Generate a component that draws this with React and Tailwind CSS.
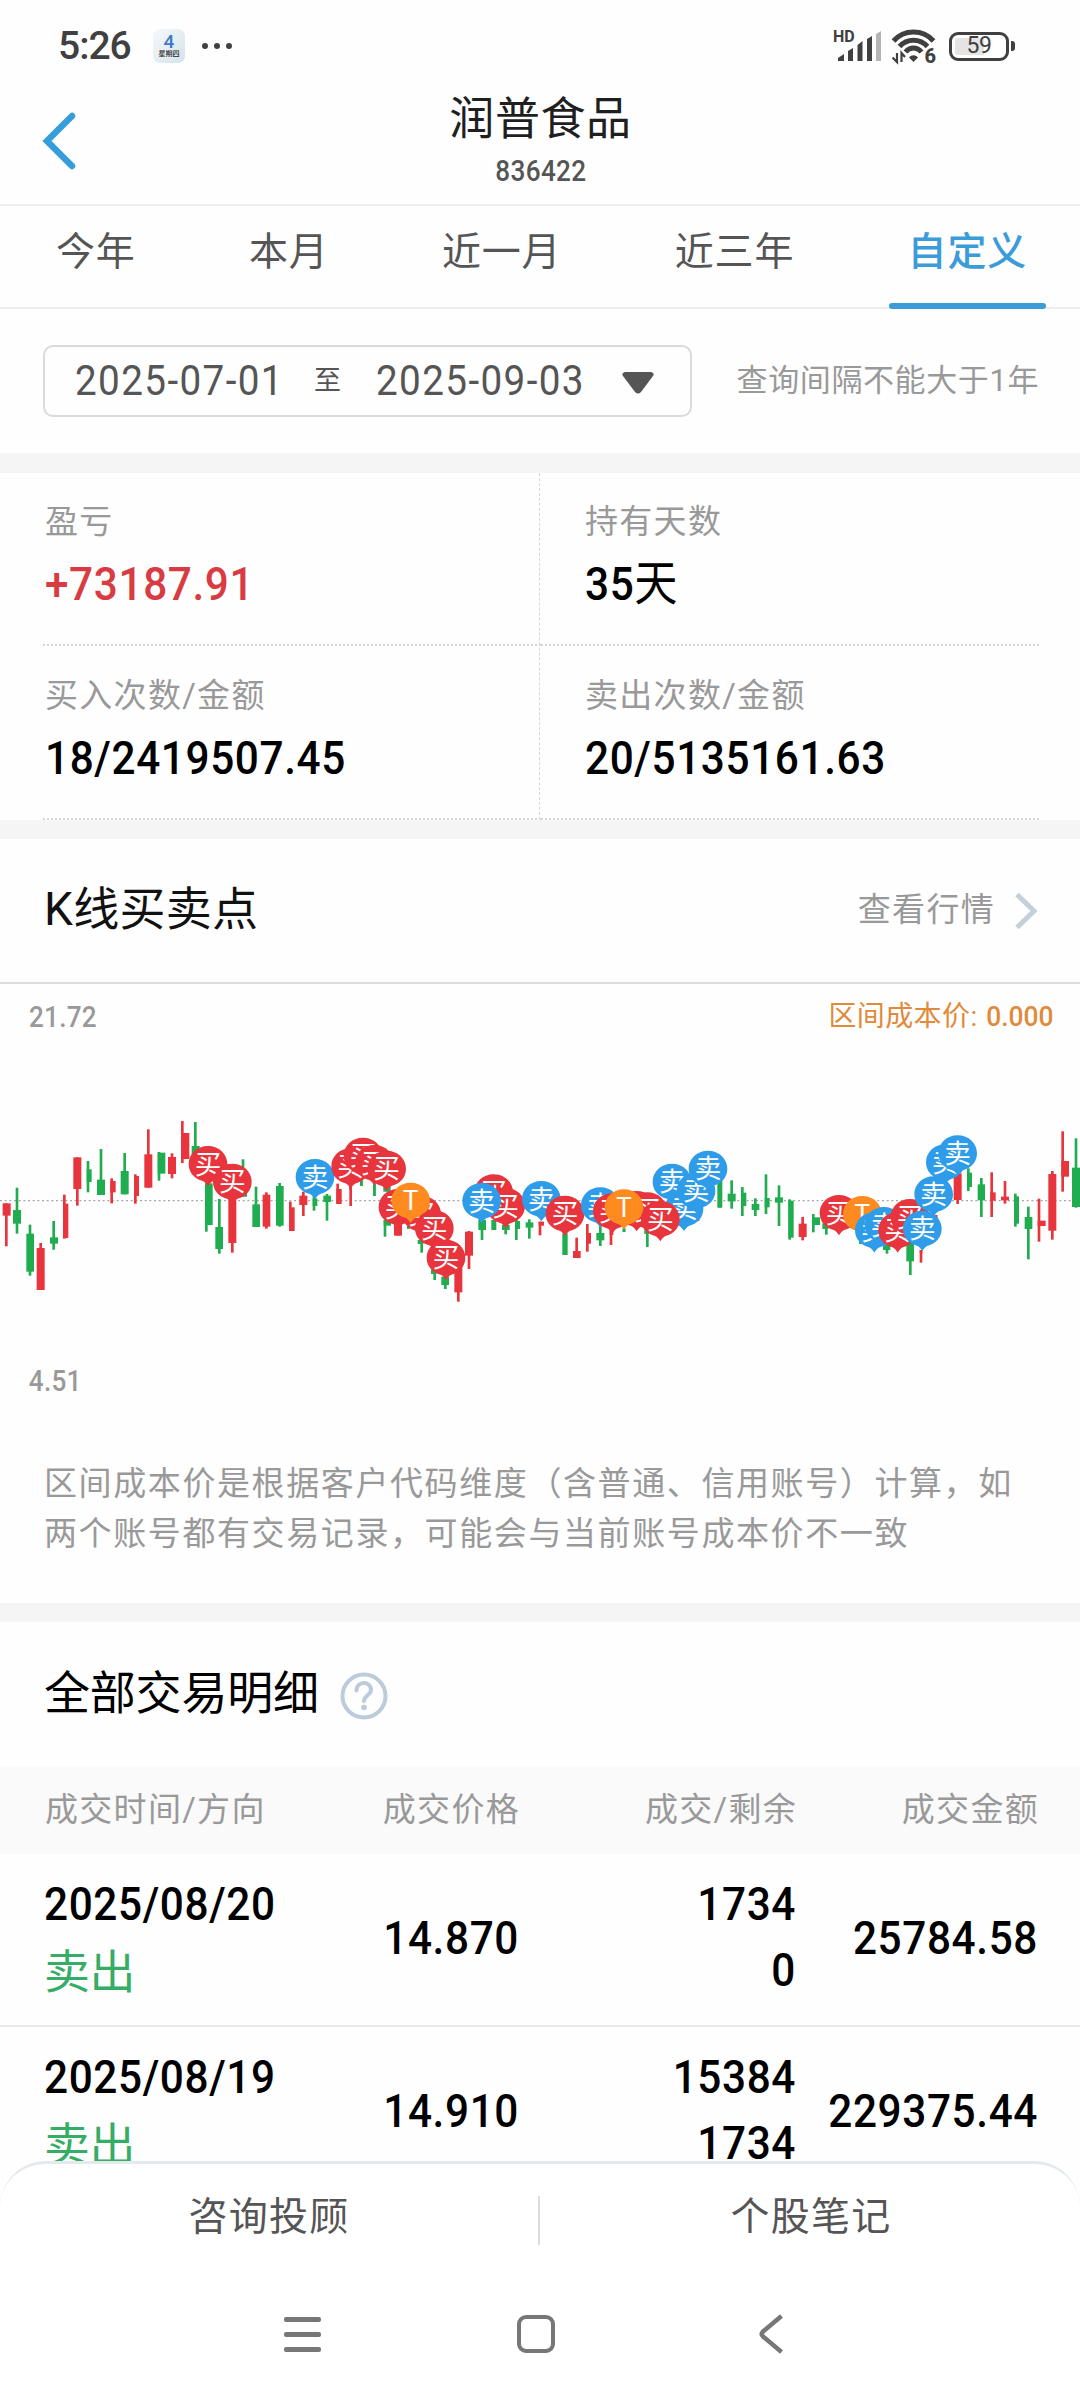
const RED = "#e8343c"
const GREEN = "#1fad50"
const BLUE = "#2f9ce9"
const ORANGE = "#ff8a1f"

const TABS = ["今年", "本月", "近一月", "近三年", "自定义"]

const STATS = [
  { label: "盈亏", value: "+73187.91", color: "text-[#d93b42]" },
  { label: "持有天数", value: "35", unit: "天", color: "text-black" },
  { label: "买入次数/金额", value: "18/2419507.45", color: "text-black" },
  { label: "卖出次数/金额", value: "20/5135161.63", color: "text-black" },
]

const TRADES = [
  { date: "2025/08/20", side: "卖出", price: "14.870", qty: "1734", left: "0", amount: "25784.58" },
  { date: "2025/08/19", side: "卖出", price: "14.910", qty: "15384", left: "1734", amount: "229375.44" },
]

// wick x, high, low, body left, body right, body top, body bottom
const UP = [
  [19, 340, 469, 8, 32, 340, 377],
  [122, 459, 600, 110, 134, 474, 600],
  [193, 314, 446, 189, 205, 341, 444],
  [232, 202, 347, 220, 244, 202, 297],
  [335, 265, 340, 331, 347, 273, 307],
  [406, 253, 341, 402, 417, 258, 318],
  [445, 118, 293, 433, 457, 193, 293],
  [516, 190, 265, 504, 528, 201, 252],
  [547, 93, 219, 543, 568, 129, 207],
  [697, 300, 488, 685, 709, 300, 459],
  [799, 307, 416, 788, 811, 314, 410],
  [871, 335, 423, 867, 884, 352, 423],
  [910, 305, 378, 898, 922, 317, 345],
  [1013, 281, 342, 1009, 1025, 297, 342],
  [1052, 280, 348, 1048, 1056, 280, 300],
  [1194, 372, 437, 1182, 1206, 372, 437],
  [1375, 530, 635, 1363, 1387, 530, 607],
  [1407, 423, 537, 1395, 1419, 425, 497],
  [1620, 395, 436, 1616, 1632, 395, 407],
  [1730, 443, 504, 1719, 1742, 483, 504],
  [1762, 402, 485, 1758, 1773, 429, 461],
  [1833, 420, 465, 1829, 1840, 420, 435],
  [2094, 385, 393, 2090, 2097, 385, 393],
  [2408, 381, 451, 2396, 2420, 401, 441],
  [2763, 480, 518, 2759, 2767, 480, 490],
  [2808, 375, 395, 2804, 2812, 375, 395],
  [2873, 250, 342, 2861, 2885, 250, 330],
  [2975, 247, 381, 2971, 2987, 307, 332],
  [3015, 273, 341, 3003, 3027, 320, 331],
  [3117, 326, 455, 3113, 3137, 392, 408],
  [3157, 243, 449, 3145, 3169, 252, 422],
  [3188, 124, 305, 3184, 3207, 213, 260],
]

const DOWN = [
  [51, 293, 431, 39, 63, 360, 401],
  [90, 404, 557, 79, 102, 431, 545],
  [161, 393, 479, 150, 174, 442, 461],
  [264, 213, 307, 260, 275, 238, 276],
  [303, 177, 315, 291, 315, 269, 315],
  [374, 189, 313, 362, 386, 243, 313],
  [477, 186, 272, 473, 496, 188, 251],
  [586, 96, 230, 575, 599, 168, 230],
  [619, 280, 425, 615, 638, 280, 405],
  [658, 327, 491, 646, 669, 411, 477],
  [729, 208, 320, 725, 741, 300, 320],
  [768, 290, 411, 757, 780, 343, 411],
  [839, 279, 410, 828, 851, 288, 407],
  [942, 310, 362, 938, 952, 325, 348],
  [981, 312, 392, 970, 993, 317, 336],
  [1084, 270, 288, 1080, 1088, 270, 288],
  [1123, 280, 318, 1119, 1127, 280, 318],
  [1161, 285, 305, 1150, 1172, 285, 305],
  [1155, 390, 440, 1151, 1173, 390, 407],
  [1225, 400, 416, 1221, 1229, 400, 416],
  [1265, 450, 488, 1253, 1270, 450, 462],
  [1304, 540, 570, 1293, 1310, 540, 552],
  [1336, 560, 597, 1324, 1347, 560, 585],
  [1446, 390, 450, 1435, 1458, 390, 420],
  [1481, 390, 420, 1474, 1489, 390, 420],
  [1517, 400, 433, 1506, 1529, 405, 420],
  [1549, 390, 450, 1545, 1560, 393, 417],
  [1588, 388, 446, 1577, 1600, 397, 413],
  [1695, 430, 495, 1687, 1703, 430, 495],
  [1801, 400, 468, 1789, 1813, 429, 451],
  [1872, 415, 426, 1868, 1876, 415, 426],
  [1942, 415, 471, 1933, 1946, 415, 432],
  [2160, 270, 353, 2152, 2167, 270, 353],
  [2195, 271, 356, 2183, 2207, 311, 334],
  [2227, 291, 378, 2223, 2239, 308, 348],
  [2266, 325, 378, 2255, 2278, 342, 360],
  [2298, 253, 372, 2294, 2309, 324, 352],
  [2337, 286, 408, 2325, 2349, 322, 338],
  [2369, 328, 449, 2365, 2381, 332, 443],
  [2440, 372, 427, 2436, 2460, 382, 405],
  [2479, 400, 434, 2467, 2485, 400, 417],
  [2582, 450, 462, 2578, 2586, 450, 462],
  [2661, 465, 491, 2649, 2671, 465, 480],
  [2731, 455, 555, 2719, 2742, 455, 514],
  [2905, 235, 303, 2901, 2916, 248, 291],
  [2944, 264, 381, 2933, 2955, 283, 331],
  [3046, 311, 410, 3042, 3057, 319, 401],
  [3085, 350, 508, 3074, 3097, 381, 417],
  [3228, 145, 353, 3216, 3240, 233, 351],
]

// label, x, top
const MARKERS = [
  ["买", 624, 168],
  ["买", 697, 221],
  ["卖", 945, 207],
  ["买", 1052, 175],
  ["买", 1089, 143],
  ["买", 1123, 165],
  ["买", 1160, 182],
  ["买", 1194, 297],
  ["买", 1265, 318],
  ["T", 1232, 278],
  ["买", 1303, 361],
  ["买", 1338, 449],
  ["买", 1481, 253],
  ["买", 1517, 294],
  ["卖", 1445, 279],
  ["卖", 1624, 273],
  ["买", 1695, 317],
  ["卖", 1801, 292],
  ["买", 1837, 310],
  ["买", 1910, 303],
  ["买", 1942, 307],
  ["T", 1872, 298],
  ["卖", 2016, 221],
  ["卖", 2052, 302],
  ["卖", 2088, 248],
  ["卖", 2124, 182],
  ["买", 1981, 333],
  ["买", 2517, 315],
  ["T", 2587, 318],
  ["卖", 2623, 367],
  ["卖", 2652, 351],
  ["买", 2693, 367],
  ["买", 2730, 327],
  ["卖", 2767, 362],
  ["卖", 2836, 163],
  ["卖", 2873, 136],
  ["卖", 2801, 259],
]

const markerColor = (label) => (label === "买" ? RED : label === "卖" ? BLUE : ORANGE)

function Candles({ data, color }) {
  return (
    <g fill={color}>
      {data.map(([x, high, low, left, right, top, bottom], i) => (
        <g key={i}>
          <rect x={x - 4} y={high} width={8} height={low - high} />
          <rect x={left} y={top} width={right - left} height={bottom - top} />
        </g>
      ))}
    </g>
  )
}

function KLineChart() {
  return (
    <svg viewBox="0 0 3240 720" className="block h-[240px] w-[1080px]">
      <line x1="0" x2="3240" y1="332" y2="332" stroke="#a8a8a8" strokeWidth="4" strokeDasharray="6 8" />
      <Candles data={UP} color={RED} />
      <Candles data={DOWN} color={GREEN} />
      {MARKERS.map(([label, x, top], i) => (
        <g key={i} transform={`translate(${x} ${top})`}>
          <path
            d="M0 0C33 0 58 24 58 54C58 80 40 99 16 105C10 107 5 113 0 121C-5 113 -10 107 -16 105C-40 99 -58 80 -58 54C-58 24 -33 0 0 0Z"
            fill={markerColor(label)}
          />
          <text
            y="83"
            textAnchor="middle"
            fill="#fff"
            fontSize="80"
            className="font-['Noto_Sans_CJK_SC',sans-serif]"
          >
            {label}
          </text>
        </g>
      ))}
    </svg>
  )
}

function StatusBar() {
  return (
    <div className="flex h-[92px] items-center pl-[58px] pr-[65px] text-[#404040]">
      <span className="w-[95px] text-[39px] font-medium tracking-[-1px]">5:26</span>
      <div className="flex h-[34px] w-[32px] flex-col items-center rounded-[7px] bg-linear-to-br from-[#f6f9fb] to-[#d5e3ea]">
        <span className="mt-[4px] text-[19px] leading-[17px] font-medium text-[#3b78cf]">4</span>
        <span className="text-[7px] leading-[9px] font-medium text-[#222]">星期四</span>
      </div>
      <div className="ml-[17px] flex gap-[6px]">
        <i className="size-[6px] rounded-full bg-[#404040]" />
        <i className="size-[6px] rounded-full bg-[#404040]" />
        <i className="size-[6px] rounded-full bg-[#404040]" />
      </div>

      {/* Mobile signal */}
      <svg viewBox="0 0 48 32" className="ml-auto h-[32px] w-[48px] overflow-visible" fill="#404040">
        <text x="-2" y="12" fontSize="16" fontWeight="700" className="font-['Roboto',sans-serif]">HD</text>
        <path d="M3 31v-3l6-4v7zM13 31V21l5-3v13zM22.500 31V15l5-4v20zM32 31V9l5-3v25z" />
        <path d="M41 31V4l5-3v30z" fill="#b5b5b5" />
      </svg>

      {/* Wifi */}
      <svg viewBox="0 0 46 36" className="ml-[8px] h-[36px] w-[46px] overflow-visible" fill="none" stroke="#404040" strokeWidth="5">
        <path d="M2.500 13C13 1 32 1 42.500 13" />
        <path d="M8.500 18.500C16 10 29 10 36.500 18.500" />
        <path d="M14.500 24C19 18.500 26 18.500 30.500 24" />
        <path d="M18 29.500C20.500 26.500 24.500 26.500 27 29.500L22.500 34z" fill="#404040" stroke="none" />
        <path d="M6 25v9L1.500 29.500M10.500 34v-9L14 29" strokeWidth="2.200" />
        <text x="33.500" y="34.500" fontSize="20" fontWeight="800" fill="#404040" stroke="#fff" strokeWidth="2" paintOrder="stroke" className="font-['Roboto',sans-serif]">6</text>
      </svg>

      {/* Battery */}
      <div className="ml-[12px] flex items-center gap-[2px]">
        <div className="flex h-[29px] w-[60px] items-center justify-center rounded-[9px] border-[3px] border-[#404040] bg-linear-to-r from-[#e4e4e4] from-59% to-white to-59% bg-clip-content p-[3px] text-[23px] tracking-[-0.5px]">
          59
        </div>
        <i className="h-[10px] w-[4px] rounded-r-[3px] bg-[#404040]" />
      </div>
    </div>
  )
}

function Header() {
  return (
    <div className="relative h-[114px] border-b-2 border-[#ededed] text-center">
      <svg viewBox="0 0 34 58" className="absolute top-[20px] left-[42px] h-[58px] w-[34px]" fill="none" stroke="#369ddd" strokeWidth="6.500" strokeLinecap="round">
        <path d="M30 4L5 29L30 54" />
      </svg>
      <h1 className="pt-[1px] pl-[1px] text-[45px] leading-[54px] tracking-[0.600px] text-[#1f1f1f]">润普食品</h1>
      <p className="mt-[8px] scale-x-90 pl-[2px] text-[29px] leading-[32px] font-medium tracking-[0.4px] text-[#555]">836422</p>
    </div>
  )
}

function Tabs() {
  return (
    <div className="flex h-[103px] justify-between border-b-2 border-[#ededed] pr-[34px] pl-[37px]">
      {TABS.map((tab, i) => (
        <div
          key={tab}
          className={
            i === TABS.length - 1
              ? "relative px-[19px] pt-[20px] text-[39px] leading-[52px] font-medium tracking-[0.800px] text-[#3c9bd9]"
              : "px-[19px] pt-[20px] text-[39px] leading-[52px] tracking-[0.800px] text-[#555]"
          }
        >
          {tab}
          {i === TABS.length - 1 && (
            <div className="absolute bottom-[-2px] left-0 h-[6px] w-full rounded-[3px] bg-[#3c9bd9]" />
          )}
        </div>
      ))}
    </div>
  )
}

function DateFilter() {
  return (
    <div className="flex h-[144px] items-center pr-[41px] pl-[43px]">
      <div className="flex h-[72px] w-[649px] items-center rounded-[10px] border-2 border-[#dadada] pl-[30px] text-[#555]">
        <span className="w-[239px] origin-left scale-x-[0.92] text-[42px] leading-[60px] tracking-[1.500px]">2025-07-01</span>
        <span className="w-[62px] text-[27px]">至</span>
        <span className="w-[245px] origin-left scale-x-[0.92] text-[42px] leading-[60px] tracking-[1.500px]">2025-09-03</span>
        <svg viewBox="0 0 34 24" className="mt-[3px] h-[24px] w-[34px]" fill="#555">
          <path d="M4 1h26q4 1 2 4L20 21q-3 3-6 0L2 5Q0 2 4 1z" />
        </svg>
      </div>
      <span className="ml-auto text-[31px] tracking-[0.600px] text-[#999]">查询间隔不能大于1年</span>
    </div>
  )
}

function Stats() {
  return (
    <div className="relative grid h-[347px] grid-cols-2 pr-[41px] pl-[43px] text-[33px]">
      {STATS.map((s) => (
        <div key={s.label} className="h-[173px] border-b-2 border-dotted border-[#d6d6d6] pt-[27px] odd:pl-[2px] even:pl-[44px]">
          <div className="leading-[44px] tracking-[1.300px] text-[#999]">{s.label}</div>
          <div className={`mt-[10px] origin-left scale-x-90 text-[47px] leading-[60px] font-medium tracking-[0.700px] ${s.color}`}>
            {s.value}
            {s.unit && <span className="text-[48px] font-normal">{s.unit}</span>}
          </div>
        </div>
      ))}
      <div className="absolute top-0 left-[539px] h-full border-l border-dashed border-[#d6d6d6]" />
    </div>
  )
}

function KLineSection() {
  return (
    <div>
      <div className="flex h-[145px] items-center border-b-2 border-[#dcdcdc] pr-[42px] pl-[44px]">
        <h2 className="mb-[3px] text-[46px] tracking-[0.3px] text-[#111]">K线买卖点</h2>
        <span className="mb-[1px] ml-auto text-[33px] tracking-[1.300px] text-[#999]">查看行情</span>
        <svg viewBox="0 0 24 38" className="ml-[19px] h-[38px] w-[24px]" fill="none" stroke="#c3d0da" strokeWidth="5">
          <path d="M3 2.500L20 19L3 35.500" />
        </svg>
      </div>
      <div className="flex h-[106px] justify-between pt-[15px] pr-[27px] pl-[29px] text-[29px] leading-[36px]">
        <span className="origin-left scale-x-90 font-medium tracking-[0.300px] text-[#999]">21.72</span>
        <div className="flex text-[28px] text-[#e08a3a]">
          <span className="tracking-[0.400px]">区间成本价:</span>
          <span className="ml-[4px] origin-right scale-x-[0.94] font-medium">0.000</span>
        </div>
      </div>
      <KLineChart />
      <div className="h-[128px] origin-left scale-x-90 pt-[33px] pl-[32px] text-[29px] leading-[36px] font-medium tracking-[0.300px] text-[#999]">4.51</div>
      <div className="h-[145px] pt-[1px] pl-[44px] text-[33px] leading-[50px] tracking-[1.600px] text-[#999]">
        <p>区间成本价是根据客户代码维度（含普通、信用账号）计算，如</p>
        <p>两个账号都有交易记录，可能会与当前账号成本价不一致</p>
      </div>
    </div>
  )
}

function Trades() {
  return (
    <div className="h-[539px] overflow-hidden">
      <div className="flex h-[145px] items-center pl-[44px]">
        <h2 className="mb-[3px] text-[46px] tracking-[-0.200px] text-black">全部交易明细</h2>
        <svg viewBox="0 0 48 48" className="mt-[2px] ml-[21px] size-[48px]" fill="none" stroke="#bccbda" strokeWidth="4">
          <circle cx="24" cy="24" r="21.500" />
          <path d="M16.500 18.500C16.500 8.500 31 8.500 31 18C31 23 24 23.500 24 29" strokeLinecap="round" />
          <circle cx="24" cy="35.500" r="2.800" fill="#bccbda" stroke="none" />
        </svg>
      </div>

      <div className="grid h-[87px] grid-cols-[320px_155px_277px_242px] items-center bg-[#fafafa] pb-[2px] pl-[45px] text-right text-[33px] tracking-[1.300px] text-[#999]">
        <span className="text-left">成交时间/方向</span>
        <span>成交价格</span>
        <span>成交/剩余</span>
        <span>成交金额</span>
      </div>

      {TRADES.map((t) => (
        <div
          key={t.date}
          className="grid h-[173px] grid-cols-[260px_215px_277px_242px] items-center border-b-2 border-[#e8e8e8] pb-[4px] pl-[44px] text-right text-[47px] leading-[66px] font-medium tracking-[0.700px] text-black"
        >
          <div className="text-left">
            <div className="origin-left scale-x-90">{t.date}</div>
            <div className="pt-[3px] text-[46px] leading-[64px] font-normal tracking-[-0.500px] text-[#36ad66]">{t.side}</div>
          </div>
          <span className="origin-right scale-x-90">{t.price}</span>
          <div className="origin-right scale-x-90 pb-[2px]">
            <div>{t.qty}</div>
            <div>{t.left}</div>
          </div>
          <span className="origin-right scale-x-90">{t.amount}</span>
        </div>
      ))}
    </div>
  )
}

function BottomBar() {
  return (
    <div className="relative h-[239px] rounded-t-[46px] border-t-[3px] border-[#e4e9ec] bg-white">
      <div className="flex h-[107px] items-center text-center text-[39px] tracking-[1.200px] text-[#555]">
        <span className="flex-1">咨询投顾</span>
        <i className="mt-[6px] h-[49px] w-[2px] bg-[#dcdcdc]" />
        <span className="flex-1 pl-[2px]">个股笔记</span>
      </div>

      {/* System navigation */}
      <div className="flex h-[126px] items-center pl-[284px]">
        <div className="flex w-[233px] flex-col gap-[10px]">
          <i className="h-[5px] w-[37px] rounded-[2px] bg-[#777]" />
          <i className="h-[5px] w-[37px] rounded-[2px] bg-[#777]" />
          <i className="h-[5px] w-[37px] rounded-[2px] bg-[#777]" />
        </div>
        <i className="size-[38px] rounded-[9px] border-[4.500px] border-[#777]" />
        <svg viewBox="0 0 26 40" className="ml-[203px] h-[40px] w-[26px]" fill="none" stroke="#777" strokeWidth="4.500">
          <path d="M23.500 2L5 17.500Q2.500 20 5 22.500L23.500 38" />
        </svg>
      </div>
    </div>
  )
}

export default function App() {
  return (
    <div className="h-[2400px] w-[1080px] overflow-hidden bg-[#fefefe] font-['Roboto','Noto_Sans_CJK_SC',sans-serif]">
      <StatusBar />
      <Header />
      <Tabs />
      <DateFilter />
      <div className="h-[20px] bg-[#f5f5f5]" />
      <Stats />
      <div className="h-[19px] bg-[#f5f5f5]" />
      <KLineSection />
      <div className="h-[19px] bg-[#f5f5f5]" />
      <Trades />
      <BottomBar />
    </div>
  )
}
